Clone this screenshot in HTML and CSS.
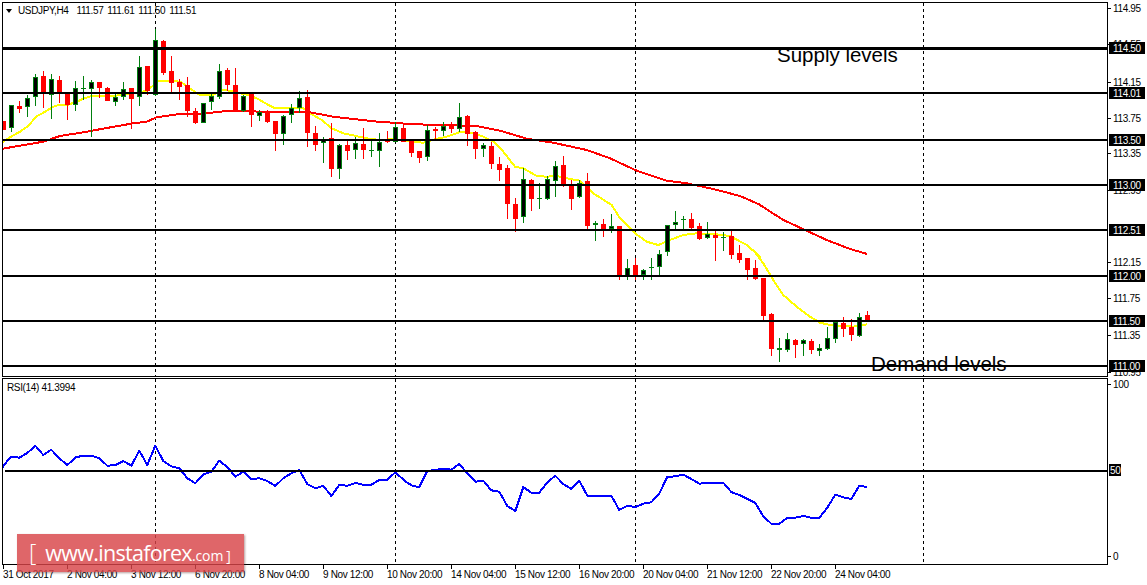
FILE: index.html
```html
<!DOCTYPE html>
<html lang="en">
<head>
<meta charset="utf-8">
<title>USDJPY,H4</title>
<link rel="stylesheet" href="styles.css">
</head>
<body>
<main class="terminal">
  <section class="row price-row">
    <div class="pane">
      <svg id="price-plot" class="plot" viewBox="3 3 1104 373" width="1104" height="373"></svg>
      <div class="legend"><span class="caret"></span><span class="legend-text">USDJPY,H4&nbsp; 111.57 111.61 111.50 111.51</span></div>
      <div class="note note-supply">Supply levels</div>
      <div class="note note-demand">Demand levels</div>
    </div>
    <div class="axis">
      <div class="lbl" style="top:0px">114.95</div>
      <div class="lbl" style="top:36px">114.55</div>
      <div class="lbl" style="top:74px">114.15</div>
      <div class="lbl" style="top:110px">113.75</div>
      <div class="lbl" style="top:145px">113.35</div>
      <div class="lbl" style="top:182px">112.95</div>
      <div class="lbl" style="top:254px">112.15</div>
      <div class="lbl" style="top:290px">111.75</div>
      <div class="lbl" style="top:327px">111.35</div>
      <div class="lbl" style="top:364px">110.95</div>
      <div class="tag" style="top:40px">114.50</div>
      <div class="tag" style="top:85px">114.01</div>
      <div class="tag" style="top:132px">113.50</div>
      <div class="tag" style="top:177px">113.00</div>
      <div class="tag" style="top:222px">112.51</div>
      <div class="tag" style="top:268px">112.00</div>
      <div class="tag" style="top:313px">111.50</div>
      <div class="tag" style="top:358px">111.00</div>
    </div>
  </section>
  <section class="row rsi-row">
    <div class="pane">
      <svg id="rsi-plot" class="plot" viewBox="3 379 1104 185" width="1104" height="185"></svg>
      <div class="legend legend-rsi">RSI(14) 41.3994</div>
    </div>
    <div class="axis">
      <div class="lbl" style="top:0px">100</div>
      <div class="tag tag-small" style="top:86px">50</div>
      <div class="lbl" style="top:172px">0</div>
    </div>
  </section>
  <div class="time-axis">
    <span class="time">31 Oct 2017</span>
    <span class="time">2 Nov 04:00</span>
    <span class="time">3 Nov 12:00</span>
    <span class="time">6 Nov 20:00</span>
    <span class="time">8 Nov 04:00</span>
    <span class="time">9 Nov 12:00</span>
    <span class="time">10 Nov 20:00</span>
    <span class="time">14 Nov 04:00</span>
    <span class="time">15 Nov 12:00</span>
    <span class="time">16 Nov 20:00</span>
    <span class="time">20 Nov 04:00</span>
    <span class="time">21 Nov 12:00</span>
    <span class="time">22 Nov 20:00</span>
    <span class="time">24 Nov 04:00</span>
  </div>
  <div class="brand"><span class="bracket">[</span><span class="www">www.instaforex</span><span class="com">.com</span><span class="bracket-end">]</span></div>
</main>
<script src="chart.js"></script>
</body>
</html>
```
FILE: styles.css
```css
* { box-sizing: border-box; }
html, body { margin: 0; padding: 0; background: #fff; }
.terminal {
  position: relative;
  width: 1147px;
  height: 585px;
  padding: 2px 0 0 2px;
  overflow: hidden;
  display: flex;
  flex-direction: column;
  gap: 1px;
  font-family: "Liberation Sans", Arial, sans-serif;
  font-size: 10px;
  letter-spacing: -0.35px;
  color: #000;
}
.row { display: flex; }
.price-row { height: 375px; }
.rsi-row { height: 187px; }
.pane {
  position: relative;
  width: 1106px;
  flex: none;
  border: 1px solid #000;
}
.plot { display: block; }
.axis { position: relative; flex: 1; }
.lbl, .tag {
  position: absolute;
  left: 0;
  height: 12px;
  line-height: 14px;
  white-space: nowrap;
}
.lbl { padding-left: 5px; }
.lbl::before {
  content: "";
  position: absolute;
  left: 0;
  top: 6px;
  width: 3px;
  height: 1px;
  background: #000;
}
.tag {
  left: 1px;
  width: 36px;
  padding-left: 4px;
  background: #000;
  color: #fff;
}
.tag-small { width: 12px; padding-left: 1px; }
.legend {
  position: absolute;
  left: 3px;
  top: 2px;
  height: 12px;
  line-height: 12px;
  display: flex;
  align-items: center;
  gap: 6px;
  white-space: pre;
}
.legend-text { word-spacing: 1.5px; }
.legend-rsi { left: 4px; top: 3px; }
.caret {
  width: 0;
  height: 0;
  border-left: 3.5px solid transparent;
  border-right: 3.5px solid transparent;
  border-top: 4px solid #000;
}
.note {
  position: absolute;
  font-size: 20.5px;
  letter-spacing: 0;
  line-height: 24px;
  white-space: nowrap;
}
.note-supply { left: 774px; top: 40px; }
.note-demand { left: 868px; top: 349px; }
.time-axis {
  display: flex;
  padding-left: 0;
}
.time {
  position: relative;
  width: 64px;
  flex: none;
  padding: 3px 0 0 1px;
  line-height: 12px;
  white-space: nowrap;
}
.time::before {
  content: "";
  position: absolute;
  left: 1px;
  top: -1px;
  width: 1px;
  height: 4px;
  background: #000;
}
.brand {
  position: absolute;
  left: 17px;
  top: 534px;
  width: 227px;
  height: 38px;
  background: rgba(216, 68, 72, 0.82);
  box-shadow: 1px 1px 2px rgba(90, 40, 40, 0.45);
  color: #fff;
  letter-spacing: 0;
  display: flex;
  align-items: baseline;
  padding: 5px 0 0 12px;
  line-height: 26px;
  font-family: "Open Sans", "Liberation Sans", sans-serif;
}
.bracket { font-size: 23px; margin-right: 9px; font-weight: 300; }
.www { font-size: 21.5px; letter-spacing: -0.7px; }
.com { font-size: 14px; letter-spacing: -0.1px; }
.bracket-end { font-size: 14px; margin-left: 3px; }
```
FILE: chart.js
```js
var NS = "http://www.w3.org/2000/svg";
function el(parent, name, attrs) {
  var n = document.createElementNS(NS, name);
  for (var k in attrs) n.setAttribute(k, attrs[k]);
  parent.appendChild(n);
  return n;
}
function rect(p, x, y, w, h, fill) {
  el(p, "rect", { x: x, y: y, width: w, height: h, fill: fill, "shape-rendering": "crispEdges" });
}
function poly(p, groups, color, width) {
  var pts = [];
  groups.forEach(function (g) {
    for (var i = 0; i < g.d.length; i += 2) {
      pts.push((g.x + g.d[i] / 3).toFixed(1) + "," + (g.y + g.d[i + 1] / 3).toFixed(1));
    }
  });
  el(p, "polyline", { points: pts.join(" "), fill: "none", stroke: color, "stroke-width": width, "stroke-linejoin": "round", "shape-rendering": "crispEdges" });
}

/* candles: high, low, body top, body bottom, 1 = bullish (black/green), 0 = bearish (red) */
var sets = [
  { y: 0, c: [
    [362,390,362,390,0],[316,395,316,385,1],[303,338,318,326,0],[285,352,295,322,1],[222,318,232,292,1],
    [213,323,228,280,0],[222,356,238,284,1],[228,308,240,280,0],[280,360,280,315,0],[243,332,265,316,1],
    [228,300,265,268,1],[240,412,247,268,1],[246,295,246,263,0],[262,302,264,302,0],[275,318,291,305,1],
    [246,300,268,290,1],[264,387,264,296,0],[168,318,202,292,1],[198,285,198,272,0],[87,287,121,286,1],
    [120,225,123,218,0],[168,276,213,248,0],[238,300,245,261,0],[230,352,256,332,0],[325,372,334,368,0],
    [310,370,310,370,1],[280,330,289,307,1],[192,296,214,292,1],[205,272,211,254,0],[205,335,256,332,0],
    [285,335,287,332,1],[280,380,282,344,0],[330,362,335,347,1],[330,368,336,365,0],[363,452,364,401,0],
    [345,434,349,403,1],[312,368,323,346,1],[273,340,295,325,1],[270,440,292,398,0],[378,452,400,434,0],
    [410,488,419,430,1],[370,530,415,506,0],[433,536,434,508,1],[420,480,436,452,0],[410,476,430,451,1],
    [385,476,432,449,0],[420,470,451,453,1],[400,500,425,452,1]
  ]},
  { y: 90, c: [
    [123,160,150,155,0],[95,155,112,155,1],[100,156,114,155,0],[148,200,150,188,0],[183,220,184,203,0],
    [105,212,121,200,1],[110,152,118,122,0],[97,138,107,124,1],[97,130,103,116,0],[40,126,82,118,1],
    [75,167,79,131,0],[124,206,126,176,0],[160,200,165,178,1],[155,236,168,221,0],[200,272,222,239,0],
    [225,386,234,341,0],[324,425,343,386,0],[234,398,268,382,1],[268,362,270,326,0],[280,356,324,328,1],
    [258,330,268,328,1],[212,320,229,272,1],[198,290,226,288,0],[270,360,282,326,0],[270,324,278,322,1],
    [250,418,274,407,0],[393,452,400,404,1],[388,440,403,418,0],[372,428,407,418,1],[408,570,409,556,0],
    [508,570,535,559,1],[505,570,526,558,0],[536,570,539,554,1],[505,570,530,535,1],[480,556,491,532,1],
    [404,497,404,487,1],[364,418,395,406,1],[378,418,388,391,1],[370,418,388,413,0],[398,450,408,446,0],
    [396,446,433,445,1],[418,512,436,443,0],[427,482,442,445,1],[422,507,438,494,0],[465,518,489,510,0],
    [503,570,504,540,0],[510,570,534,568,0]
  ]},
  { y: 190, c: [
    [264,395,264,378,0],[370,497,372,476,0],[444,515,475,480,1],[430,486,448,480,1],[448,503,450,464,0],
    [448,497,451,461,1],[447,491,453,480,0],[462,497,475,482,1],[412,480,445,478,1],[392,458,397,448,1],
    [381,440,400,416,0],[387,452,412,434,0],[370,440,380,437,1],[363,395,375,393,0]
  ]}
];

var guides = [155, 395, 635, 923];
var price = document.getElementById("price-plot");
var rsi = document.getElementById("rsi-plot");

function dashed(p, y1, y2) {
  guides.forEach(function (x) {
    el(p, "line", { x1: x + 0.5, x2: x + 0.5, y1: y1, y2: y2, stroke: "#000", "stroke-dasharray": "3 3", "shape-rendering": "crispEdges" });
  });
}
dashed(price, 3, 376);
dashed(rsi, 379, 564);

poly(price, [
  { x: 0, y: 0, d: [8,426,30,412,60,395,85,378,108,350,130,338,160,320,180,314,205,314,230,305,250,296,275,288,300,288,345,287,390,282,440,272,455,260,475,242,510,242,540,245,560,258,590,280,600,284,640,284,665,270,690,272,720,280,745,285,770,295,800,312,825,325,880,325,910,325,930,340,965,360,995,385,1030,400,1100,415] },
  { x: 380, y: 90, d: [0,150,40,147,70,150,100,155,130,158,165,148,200,140,240,126,280,130,310,140,340,155,370,185,405,230,430,235,470,258,500,260,530,258,560,265,600,272,640,310,695,345,720,385,765,430,800,455,835,465,870,450,910,435,950,430,1000,432,1050,438,1100,465,1140,500] },
  { x: 740, y: 190, d: [40,180,70,220,100,270,130,315,170,350,210,380,240,398,270,405,340,410,382,403] }
], "#ffff00", 2);
poly(price, [
  { x: 0, y: 0, d: [8,446,60,437,130,425,180,408,250,397,320,384,400,370,440,365,470,352,540,342,600,342,680,333,800,335,920,335,1000,350,1140,366] },
  { x: 380, y: 90, d: [0,95,100,103,200,105,290,108,360,122,440,146,520,158,620,180,690,205,770,242,860,272,920,280,1000,297,1080,318,1140,344] },
  { x: 740, y: 190, d: [60,45,130,90,200,122,260,150,330,177,382,192] }
], "#ff0000", 2);

var i = 0;
sets.forEach(function (s) {
  s.c.forEach(function (c) {
    var cx = 3 + 8 * i;
    var hi = Math.round(s.y + c[0] / 3), lo = Math.round(s.y + c[1] / 3);
    var top = Math.round(s.y + c[2] / 3), bot = Math.round(s.y + c[3] / 3);
    if (bot <= top) bot = top + 1;
    var col = c[4] ? "#007f0e" : "#ff0000";
    rect(price, cx, hi, 1, lo - hi, col);
    rect(price, cx - 2, top, 5, bot - top, col);
    if (c[4] && bot - top > 2) rect(price, cx - 1, top + 1, 3, bot - top - 2, "#000");
    i++;
  });
});

[[47,3],[92,2],[139,2],[184,2],[229,2],[275,2],[320,2],[365,2]].forEach(function (h) {
  rect(price, 3, h[0], 1104, h[1], "#000");
});

poly(rsi, [
  { x: 0, y: 375, d: [8,276,32,245,58,248,82,234,106,212,130,240,154,224,178,250,202,270,230,245,274,242,298,250,322,272,346,270,370,258,394,272,418,227,442,270,466,212,490,258,514,274,538,280,562,310,586,325,610,298,634,290,658,257,682,276,706,305,730,290,754,312,778,310,802,318,826,333,850,310,874,295,898,285,922,327,946,340,970,332,994,363,1018,330,1042,332,1066,324,1090,329,1114,329,1138,315,1162,314,1186,292] },
  { x: 400, y: 375, d: [-2,303,20,322,38,333,58,336,82,288,118,283,130,281,154,284,178,266,202,296,226,320,250,317,274,346,298,350,322,393,346,408,370,336,394,353,418,353,442,322,466,302,490,327,514,342,538,317,562,362,634,362,658,405,682,392,706,396,730,386,754,382,778,355,802,306,826,304,850,299,874,312,898,326,922,323,970,323,994,351,1018,360,1042,372,1066,384,1090,424,1114,446,1138,446,1162,428,1186,428,1210,423,1234,428,1258,428,1282,398,1306,359,1330,367,1354,372,1378,332,1402,336] }
], "#0000ff", 2);
rect(rsi, 5, 470, 1102, 2, "#000");
```
